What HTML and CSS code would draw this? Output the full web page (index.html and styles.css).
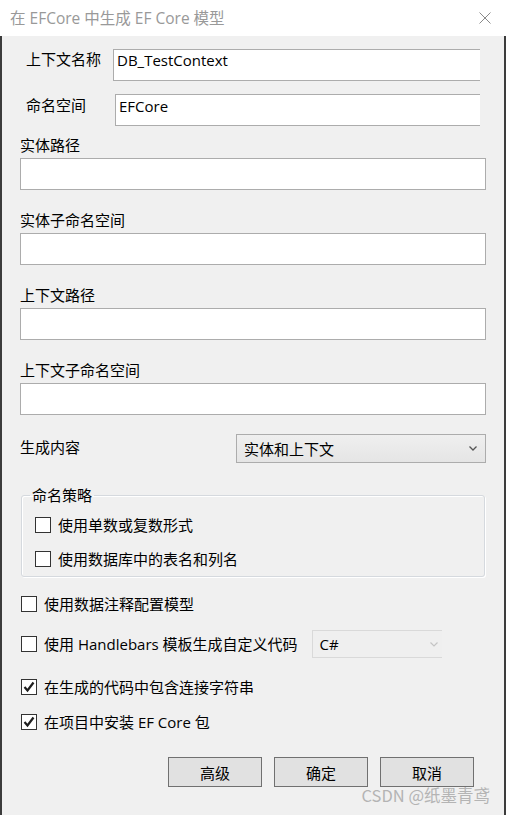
FILE: index.html
```html
<!DOCTYPE html>
<html lang="zh-CN">
<head>
    <meta charset="UTF-8">
    <title>在 EFCore 中生成 EF Core 模型</title>
    <link rel="stylesheet" href="styles.css">
</head>
<body>
    <div class="dialog">
        <div class="titlebar">
            <span class="title">在 EFCore 中生成 EF Core 模型</span>
            <svg class="close" width="12" height="12" viewBox="0 0 12 12">
                <path d="M0.5 0.5 L11.5 11.5 M11.5 0.5 L0.5 11.5" stroke="#8a8a8a" stroke-width="1" fill="none"/>
            </svg>
        </div>

        <div class="content">
            <div class="inline-field first">
                <span class="label">上下文名称</span>
                <div class="textbox">DB_TestContext</div>
            </div>
            <div class="inline-field second">
                <span class="label">命名空间</span>
                <div class="textbox">EFCore</div>
            </div>

            <div class="field">
                <div class="label">实体路径</div>
                <div class="textbox wide"></div>
            </div>
            <div class="field">
                <div class="label">实体子命名空间</div>
                <div class="textbox wide"></div>
            </div>
            <div class="field">
                <div class="label">上下文路径</div>
                <div class="textbox wide"></div>
            </div>
            <div class="field">
                <div class="label">上下文子命名空间</div>
                <div class="textbox wide"></div>
            </div>

            <div class="select-row">
                <span class="label">生成内容</span>
                <div class="combo">
                    <span>实体和上下文</span>
                    <svg width="8" height="5" viewBox="0 0 8 5">
                        <polyline points="0.5,0.5 4,4 7.5,0.5" stroke="#555" stroke-width="1.3" fill="none"/>
                    </svg>
                </div>
            </div>

            <fieldset class="group">
                <legend>命名策略</legend>
                <div class="check-row">
                    <span class="box"></span>
                    <span>使用单数或复数形式</span>
                </div>
                <div class="check-row">
                    <span class="box"></span>
                    <span>使用数据库中的表名和列名</span>
                </div>
            </fieldset>

            <div class="check-row annotations">
                <span class="box"></span>
                <span>使用数据注释配置模型</span>
            </div>
            <div class="check-row handlebars">
                <span class="box"></span>
                <span>使用 Handlebars 模板生成自定义代码</span>
                <div class="combo disabled">
                    <span>C#</span>
                    <svg width="8" height="5" viewBox="0 0 8 5">
                        <polyline points="0.5,0.5 4,4 7.5,0.5" stroke="#c4c4c4" stroke-width="1.2" fill="none"/>
                    </svg>
                </div>
            </div>
            <div class="check-row connection">
                <span class="box">
                    <svg width="14" height="14" viewBox="0 0 14 14">
                        <polyline points="2.5,7 5.5,10.5 11.5,2.5" stroke="#1e1e1e" stroke-width="2.2" fill="none"/>
                    </svg>
                </span>
                <span>在生成的代码中包含连接字符串</span>
            </div>
            <div class="check-row install">
                <span class="box">
                    <svg width="14" height="14" viewBox="0 0 14 14">
                        <polyline points="2.5,7 5.5,10.5 11.5,2.5" stroke="#1e1e1e" stroke-width="2.2" fill="none"/>
                    </svg>
                </span>
                <span>在项目中安装 EF Core 包</span>
            </div>

            <div class="buttons">
                <button class="btn">高级</button>
                <button class="btn">确定</button>
                <button class="btn">取消</button>
            </div>
        </div>
    </div>

    <div class="watermark">CSDN @纸墨青鸢</div>
</body>
</html>
```

FILE: styles.css
```css
* {
    margin: 0;
    padding: 0;
    box-sizing: border-box;
}

body {
    font-family: "Open Sans", "Noto Sans CJK SC", sans-serif;
    font-size: 15px;
    line-height: 20px;
    color: #000;
    background: #f0f0f0;
    position: relative;
}

.dialog {
    width: 506px;
    height: 815px;
    display: flex;
    flex-direction: column;
}

.titlebar {
    height: 36px;
    background: #fff;
    display: flex;
    align-items: center;
    justify-content: space-between;
    padding: 0 15px 0 10px;
}

.title {
    color: #999;
    font-size: 15.5px;
    margin-top: -1px;
}

.close {
    margin-top: -1px;
}

.content {
    flex: 1;
    background: #f0f0f0;
    border-left: 2px solid #3c3c3c;
    border-right: 2px solid #3c3c3c;
    padding: 13px 18px 0 18px;
}

.textbox {
    height: 32px;
    background: #fff;
    border: 1px solid #acacac;
    padding: 0 3px;
}

.inline-field {
    display: flex;
    align-items: flex-start;
    margin: 0 6px 0 6px;
}

.inline-field .label {
    width: 87px;
}

.inline-field .textbox {
    flex: 1;
    border-right: none;
}

.inline-field.second {
    margin-top: 13px;
}

.inline-field.second .label {
    width: 89px;
    padding-top: 1px;
}

.inline-field.second .textbox {
    padding-top: 1px;
}

.field {
    margin-top: 20px;
}

.inline-field.second + .field {
    margin-top: 9px;
}

.field .label {
    margin-bottom: 3px;
}

.select-row {
    display: flex;
    justify-content: space-between;
    align-items: flex-start;
    margin-top: 19px;
}

.select-row .label {
    padding-top: 3px;
}

.combo {
    width: 250px;
    height: 29px;
    border: 1px solid #acacac;
    background: linear-gradient(#efefef, #e5e5e5);
    display: flex;
    align-items: center;
    justify-content: space-between;
    padding: 0 8px 0 7px;
}

.combo.disabled {
    width: 130px;
    height: 28px;
    margin-left: 14px;
    background: #efefef;
    border-color: #d9d9d9;
    border-right: none;
    padding: 0 4px 0 7px;
}

.group {
    margin: 22px 1px 0 1px;
    border: 1px solid #d5d9de;
    border-radius: 3px;
    box-shadow: inset 1px 1px 0 #fff, 1px 1px 0 #fff;
    padding: 0 0 7px 13px;
}

.group legend {
    margin-left: -5px;
    padding: 0 2px;
}

.check-row {
    display: flex;
    align-items: center;
    height: 20px;
}

.group .check-row {
    margin-top: 14px;
}

.group legend + .check-row {
    margin-top: 10px;
}

.box {
    width: 16px;
    height: 16px;
    border: 1px solid #333;
    background: #fff;
    margin-right: 7px;
    display: flex;
    align-items: center;
    justify-content: center;
}

.box svg {
    display: block;
}

.check-row.annotations {
    margin-top: 17px;
    margin-left: 1px;
}

.check-row.handlebars {
    margin-top: 16px;
    margin-left: 1px;
    height: 28px;
}

.check-row.connection {
    margin-top: 19px;
    margin-left: 1px;
}

.check-row.install {
    margin-top: 15px;
    margin-left: 1px;
}

.buttons {
    display: flex;
    justify-content: flex-end;
    gap: 12px;
    margin: 25px 12px 0 0;
}

.btn {
    width: 94px;
    height: 30px;
    background: #e1e1e1;
    border: 1px solid #707070;
    font-family: "Open Sans", "Noto Sans CJK SC", sans-serif;
    font-size: 15px;
    color: #000;
}

.watermark {
    position: absolute;
    right: 16px;
    top: 785px;
    font-size: 16.5px;
    color: #b4b4b4;
    font-family: "Noto Sans CJK SC", sans-serif;
}
```
